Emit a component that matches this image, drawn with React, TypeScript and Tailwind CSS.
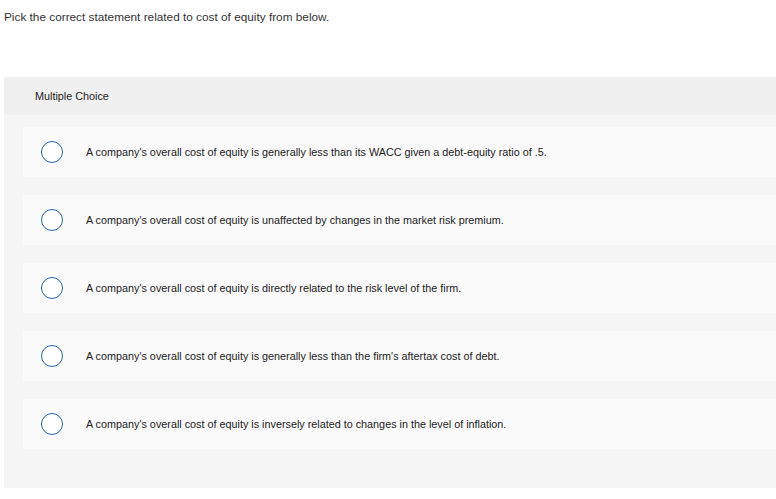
const options = [
  "A company's overall cost of equity is generally less than its WACC given a debt-equity ratio of .5.",
  "A company's overall cost of equity is unaffected by changes in the market risk premium.",
  "A company's overall cost of equity is directly related to the risk level of the firm.",
  "A company's overall cost of equity is generally less than the firm's aftertax cost of debt.",
  "A company's overall cost of equity is inversely related to changes in the level of inflation.",
]

export default function App() {
  return (
    <div className="h-[499px] w-[776px] overflow-hidden bg-white font-['Liberation_Sans',Arial,sans-serif] text-[#333]">
      <p className="pl-[4px] pt-[10px] text-[11.8px] leading-[14px]">
        Pick the correct statement related to cost of equity from below.
      </p>

      <div className="ml-[4px] mt-[53px] bg-[#f5f5f5]">
        <div className="flex h-[38px] items-center bg-[#f0f0f0] pl-[31px] text-[10.8px] text-[#222]">
          Multiple Choice
        </div>
        <div className="flex flex-col gap-[18px] pb-[39px] pl-[19px] pt-[12px]">
          {options.map((o) => (
            <label key={o} className="flex h-[50px] cursor-pointer items-center bg-[#fafafa]">
              <span className="ml-[18px] h-[22px] w-[22px] shrink-0 rounded-full border-[1.5px] border-[#2867a8] bg-white" />
              <span className="ml-[23px] text-[10.8px] text-[#222]">{o}</span>
            </label>
          ))}
        </div>
      </div>
    </div>
  )
}
